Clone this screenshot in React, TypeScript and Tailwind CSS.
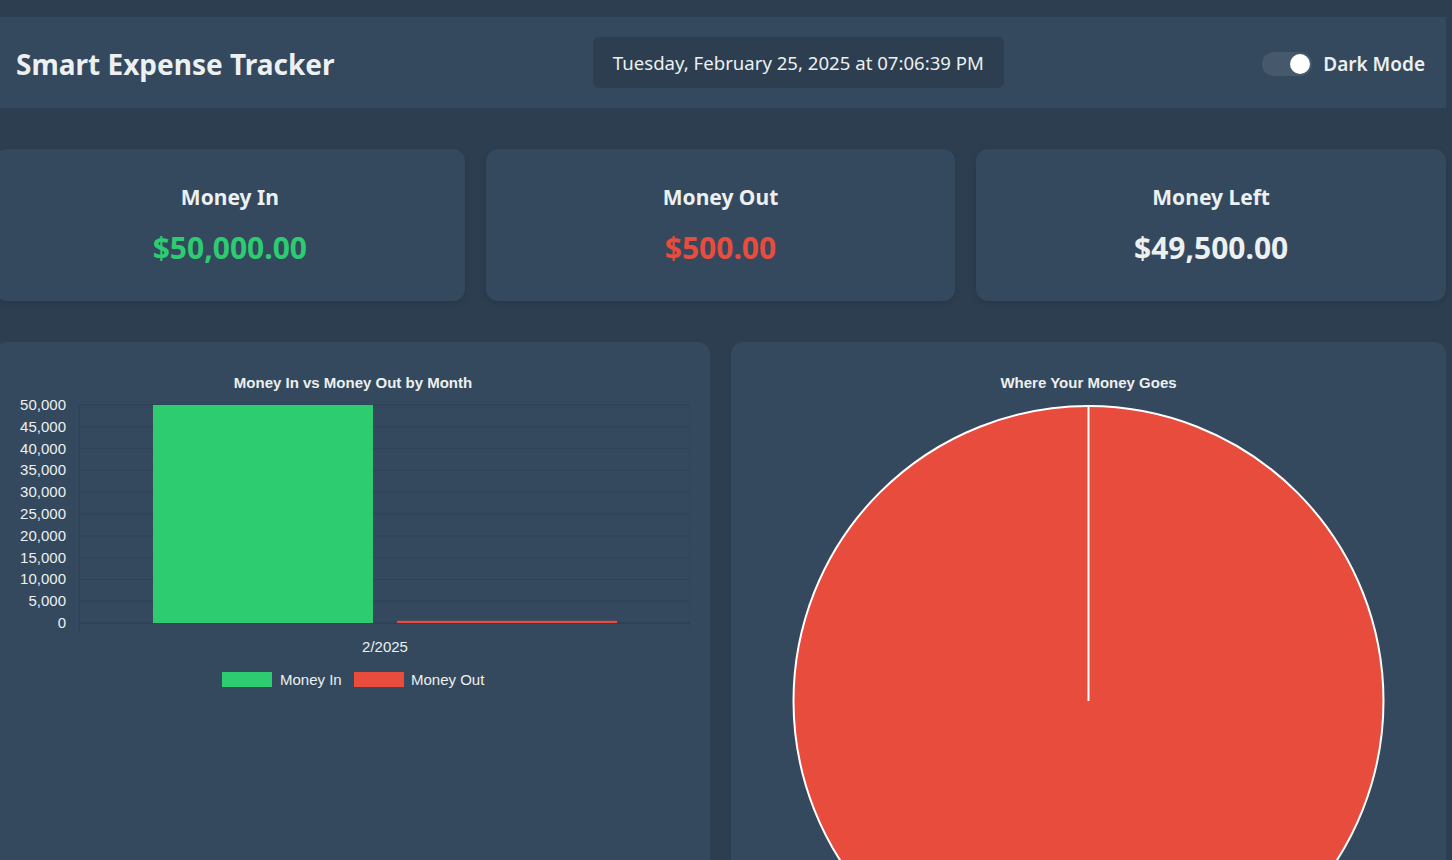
import React from "react";

const FONT = { fontFamily: '"Noto Sans", "Open Sans", sans-serif' };

function BarChart() {
  const top = 43;
  const bottom = 261;
  const left = 64;
  const right = 675;
  const step = (bottom - top) / 10;
  const labels = ["50,000", "45,000", "40,000", "35,000", "30,000", "25,000", "20,000", "15,000", "10,000", "5,000", "0"];
  return (
    <svg width="675" height="340" className="block" style={{ fontFamily: '"Liberation Sans", Arial, sans-serif' }}>
      <text x="338" y="26" textAnchor="middle" fontSize="15" fontWeight="700" fill="#ecf0f1">
        Money In vs Money Out by Month
      </text>
      {labels.map((l, i) => {
        const y = top + i * step;
        return (
          <g key={l}>
            <line x1={left} x2={right} y1={y} y2={y} stroke={i === 10 ? "#2a3b4d" : "#2f4256"} strokeWidth="1" />
            <text x="51" y={y + 5} textAnchor="end" fontSize="15" fill="#ecf0f1">
              {l}
            </text>
          </g>
        );
      })}
      <line x1={left} x2={left} y1={top} y2={bottom + 10} stroke="#2f4256" strokeWidth="1" />
      <line x1={right} x2={right} y1={top} y2={bottom + 10} stroke="#2f4256" strokeWidth="1" />
      <rect x="138" y={top} width="220" height={bottom - top} fill="#2ecc71" />
      <rect x="382" y={bottom - 2.2} width="220" height="2.2" fill="#e74c3c" />
      <text x="370" y="290" textAnchor="middle" fontSize="15" fill="#ecf0f1">
        2/2025
      </text>
      <rect x="207" y="310" width="50" height="15" fill="#2ecc71" />
      <text x="265" y="323" fontSize="15" fill="#ecf0f1">
        Money In
      </text>
      <rect x="339" y="310" width="50" height="15" fill="#e74c3c" />
      <text x="396" y="323" fontSize="15" fill="#ecf0f1">
        Money Out
      </text>
    </svg>
  );
}

function PieChart() {
  return (
    <svg width="675" height="640" className="block" style={{ fontFamily: '"Liberation Sans", Arial, sans-serif' }}>
      <text x="337.5" y="26" textAnchor="middle" fontSize="15" fontWeight="700" fill="#ecf0f1">
        Where Your Money Goes
      </text>
      <circle cx="337.5" cy="339" r="295" fill="#e74c3c" stroke="#ffffff" strokeWidth="2" />
      <line x1="337.5" x2="337.5" y1="44" y2="339" stroke="#ffffff" strokeWidth="2" />
    </svg>
  );
}

function StatCard({ title, value, color }: { title: string; value: string; color: string }) {
  return (
    <div className="bg-[#34495e] rounded-xl h-[152px] flex flex-col items-center justify-center shadow-[0_2px_6px_rgba(0,0,0,0.12)]">
      <div className="text-[21px] font-bold text-[#ecf0f1] leading-none mt-[-1px]">{title}</div>
      <div className={`text-[30px] font-bold leading-none mt-[25px] ${color}`}>{value}</div>
    </div>
  );
}

export default function App() {
  return (
    <div className="bg-[#2c3e50] h-[860px] w-[1452px] overflow-hidden" style={FONT}>
      <div className="ml-[-5px] w-[1451px] pt-[17px]">
        <header className="bg-[#34495e] h-[91px] flex items-center justify-between px-[21px]">
          <h1 className="text-[28px] font-bold text-[#ecf0f1] leading-none mt-[2px]">Smart Expense Tracker</h1>
          <div className="bg-[#2c3e50] rounded-md h-[51px] px-[20px] flex items-center text-[18.6px] text-[#ecf0f1]">
            Tuesday, February 25, 2025 at 07:06:39 PM
          </div>
          <div className="flex items-center gap-[11px] mt-[3px]">
            <div className="w-[50px] h-[24px] rounded-full bg-[#46586b] flex items-center justify-end pr-[2px]">
              <div className="w-[20px] h-[20px] rounded-full bg-white" />
            </div>
            <span className="text-[19px] font-semibold text-[#ecf0f1]">Dark Mode</span>
          </div>
        </header>

        <div className="grid grid-cols-3 gap-[21px] mt-[41px]">
          <StatCard title="Money In" value="$50,000.00" color="text-[#2ecc71]" />
          <StatCard title="Money Out" value="$500.00" color="text-[#e74c3c]" />
          <StatCard title="Money Left" value="$49,500.00" color="text-[#ecf0f1]" />
        </div>

        <div className="grid grid-cols-2 gap-[21px] mt-[41px]">
          <div className="bg-[#34495e] rounded-xl p-[20px] h-[700px]">
            <BarChart />
          </div>
          <div className="bg-[#34495e] rounded-xl p-[20px] h-[700px]">
            <PieChart />
          </div>
        </div>
      </div>
    </div>
  );
}
